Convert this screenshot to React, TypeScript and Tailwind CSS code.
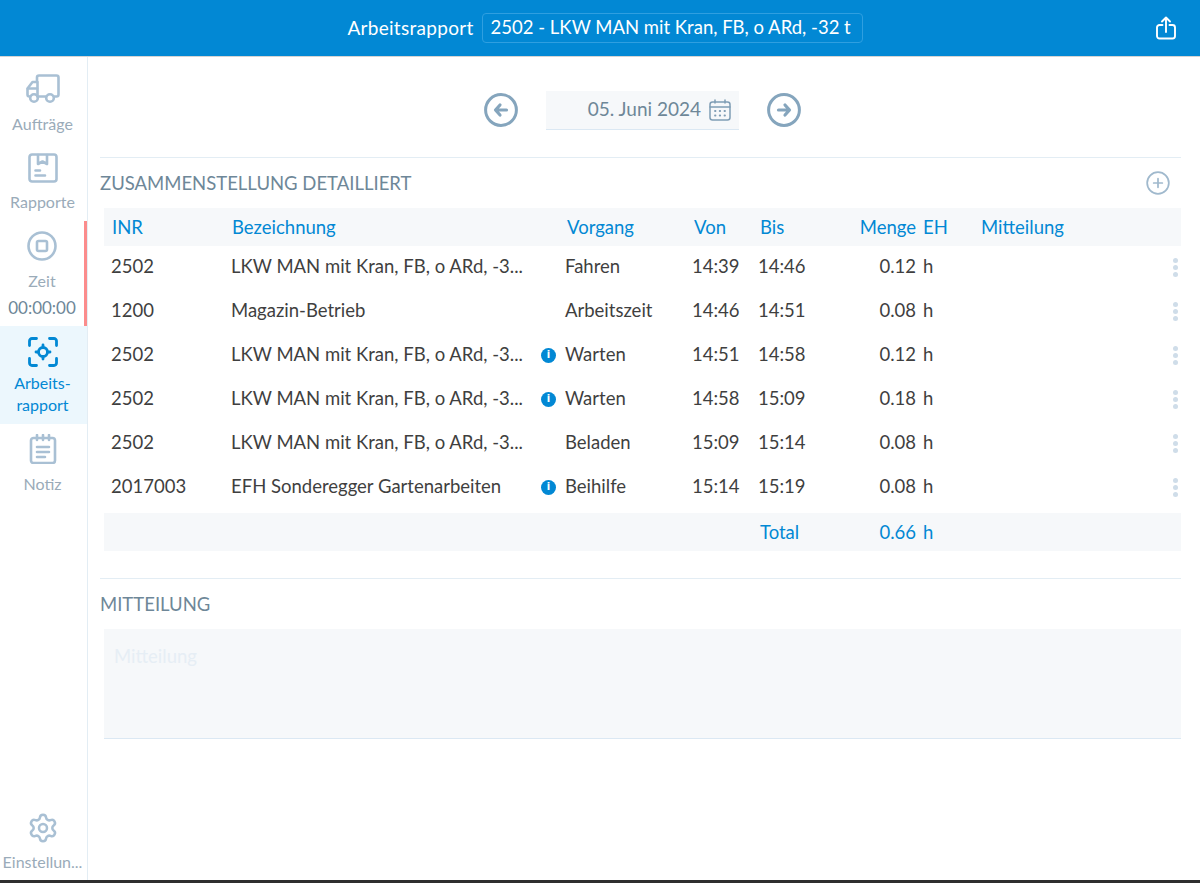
import { CirclePlus, Settings } from "lucide-react";

const FONT = "font-['Lato','Open_Sans',sans-serif]";

type Row = { inr: string; name: string; info?: boolean; step: string; from: string; to: string; qty: string };

const rows: Row[] = [
  { inr: "2502", name: "LKW MAN mit Kran, FB, o ARd, -3...", step: "Fahren", from: "14:39", to: "14:46", qty: "0.12" },
  { inr: "1200", name: "Magazin-Betrieb", step: "Arbeitszeit", from: "14:46", to: "14:51", qty: "0.08" },
  { inr: "2502", name: "LKW MAN mit Kran, FB, o ARd, -3...", info: true, step: "Warten", from: "14:51", to: "14:58", qty: "0.12" },
  { inr: "2502", name: "LKW MAN mit Kran, FB, o ARd, -3...", info: true, step: "Warten", from: "14:58", to: "15:09", qty: "0.18" },
  { inr: "2502", name: "LKW MAN mit Kran, FB, o ARd, -3...", step: "Beladen", from: "15:09", to: "15:14", qty: "0.08" },
  { inr: "2017003", name: "EFH Sonderegger Gartenarbeiten", info: true, step: "Beihilfe", from: "15:14", to: "15:19", qty: "0.08" },
];

const COLS = "grid grid-cols-[120px_334px_127px_66px_66px_92px_65px_1fr_12px] pl-[7px]";

function TruckIcon() {
  return (
    <svg width="34" height="30" viewBox="0 0 34 30" fill="none" stroke="#a9c0d4" strokeWidth="2.6" strokeLinejoin="round" strokeLinecap="round">
      <path d="M11 8V3.5A2 2 0 0 1 13 1.5H30.5A2 2 0 0 1 32.5 3.5V20.5A2 2 0 0 1 30.5 22.5H28" />
      <path d="M20 22.5H11.5V8H6.5L1.5 14.5V20.5A2 2 0 0 0 3.5 22.5H4" />
      <path d="M2 14.5H11" />
      <circle cx="8" cy="24" r="3.8" />
      <circle cx="24" cy="24" r="3.8" />
    </svg>
  );
}

function ReportIcon() {
  return (
    <svg width="30" height="30" viewBox="0 0 30 30" fill="none" stroke="#a9c0d4" strokeWidth="2.6" strokeLinejoin="round" strokeLinecap="round">
      <rect x="1.5" y="1.5" width="27" height="27" rx="2.5" />
      <path d="M10 2V11L14.5 8.5L19 11V2" />
      <path d="M7.5 17.5H12M7.5 22.5H17" />
    </svg>
  );
}

function StopIcon() {
  return (
    <svg width="30" height="30" viewBox="0 0 30 30" fill="none" stroke="#a9c0d4" strokeWidth="2.6">
      <circle cx="15" cy="15" r="13.5" />
      <rect x="10" y="10" width="10" height="10" rx="1.5" />
    </svg>
  );
}

function TargetIcon() {
  return (
    <svg width="30" height="30" viewBox="0 0 30 30" fill="none" stroke="#0288d4" strokeWidth="2.8" strokeLinecap="round" strokeLinejoin="round">
      <path d="M1.5 8.5V4A2.5 2.5 0 0 1 4 1.5H8.5M21.5 1.5H26A2.5 2.5 0 0 1 28.5 4V8.5M28.5 21.5V26A2.5 2.5 0 0 1 26 28.5H21.5M8.5 28.5H4A2.5 2.5 0 0 1 1.5 26V21.5" />
      <circle cx="15" cy="15" r="4.5" />
      <path d="M15 8V10.5M15 19.5V22M8 15H10.5M19.5 15H22" />
    </svg>
  );
}

function NoteIcon() {
  return (
    <svg width="28" height="30" viewBox="0 0 28 30" fill="none" stroke="#a9c0d4" strokeWidth="2.6" strokeLinecap="round" strokeLinejoin="round">
      <rect x="2" y="4" width="24" height="25" rx="2.5" />
      <path d="M8 1V6M14 1V6M20 1V6" />
      <path d="M8 13H20M8 18H20M8 23H16" />
    </svg>
  );
}

function CalendarIcon() {
  return (
    <svg width="22" height="22" viewBox="0 0 22 22" fill="none" stroke="#7f9db5" strokeWidth="1.5" strokeLinecap="round">
      <rect x="1" y="3" width="20" height="18" rx="2.5" />
      <path d="M1 8H21M6 1V4M16 1V4" />
      <path d="M6 12H6.5M10.7 12H11.2M15.5 12H16M6 16.5H6.5M10.7 16.5H11.2M15.5 16.5H16" strokeWidth="1.8" />
    </svg>
  );
}

function ShareIcon() {
  return (
    <svg width="20" height="24" viewBox="0 0 20 24" fill="none" stroke="#ffffff" strokeWidth="1.9" strokeLinecap="round" strokeLinejoin="round">
      <path d="M6.5 9H3.5A2.5 2.5 0 0 0 1 11.5V20A2.5 2.5 0 0 0 3.5 22.5H16.5A2.5 2.5 0 0 0 19 20V11.5A2.5 2.5 0 0 0 16.5 9H13.5" />
      <path d="M10 16V1.5M6 5.5L10 1.5L14 5.5" />
    </svg>
  );
}

function ArrowCircle({ dir }: { dir: "left" | "right" }) {
  return (
    <svg width="34" height="34" viewBox="0 0 34 34" fill="none" stroke="#85a5bd" strokeLinecap="round" strokeLinejoin="round">
      <circle cx="17" cy="17" r="15.4" strokeWidth="3" />
      {dir === "left" ? (
        <path d="M16 12L11.5 17L16 22M12 17H22.5" strokeWidth="3.2" />
      ) : (
        <path d="M18 12L22.5 17L18 22M22 17H11.5" strokeWidth="3.2" />
      )}
    </svg>
  );
}

function InfoDot() {
  return (
    <span className="flex h-[15px] w-[15px] items-center justify-center rounded-full bg-[#0288d4] font-['DejaVu_Sans',sans-serif] text-[10px] font-bold leading-none text-white">
      i
    </span>
  );
}

function Kebab() {
  return (
    <span className="flex flex-col items-center gap-[2px]">
      <span className="h-[5px] w-[5px] rounded-full bg-[#cfdde9]" />
      <span className="h-[5px] w-[5px] rounded-full bg-[#cfdde9]" />
      <span className="h-[5px] w-[5px] rounded-full bg-[#cfdde9]" />
    </span>
  );
}

export default function App() {
  return (
    <div className={`flex h-[883px] w-[1200px] flex-col overflow-hidden bg-white ${FONT}`}>
      <header className="flex h-[57px] shrink-0 items-center border-b border-[#d4d4d4] bg-[#0288d4]">
        <div className="flex flex-1 items-center justify-center gap-2 pl-[54px]">
          <span className="text-[19px] tracking-[0.3px] text-white">Arbeitsrapport</span>
          <span className="flex h-[30px] w-[381px] items-center rounded-[4px] border border-[#2f9fe0] pl-2 text-[18.5px] text-white">
            2502 - LKW MAN mit Kran, FB, o ARd, -32 t
          </span>
        </div>
        <div className="pr-[24px]">
          <ShareIcon />
        </div>
      </header>

      <div className="flex min-h-0 flex-1">
        <aside className="flex w-[88px] shrink-0 flex-col border-r border-[#e3edf4] pt-[7px] text-[#9aabb9]">
          <div className="flex h-[78px] flex-col items-center pt-[10px] pr-[2px]">
            <TruckIcon />
            <span className="mt-[10px] text-[16px] leading-[20px]">Aufträge</span>
          </div>
          <div className="flex h-[79px] flex-col items-center pt-[11px] pr-[2px]">
            <ReportIcon />
            <span className="mt-[9px] text-[16px] leading-[20px]">Rapporte</span>
          </div>
          <div className="flex h-[105px] flex-col items-center border-r-[3px] border-[#fb8c8c] pt-[10px]">
            <StopIcon />
            <span className="mt-[10px] text-[16px] leading-[20px]">Zeit</span>
            <span className="mt-[7px] text-[17px] leading-[20px] text-[#6e8798]">00:00:00</span>
          </div>
          <div className="flex h-[98px] flex-col items-center bg-[#ecf7fd] pt-[11px] pr-[2px] text-[#0288d4]">
            <TargetIcon />
            <span className="mt-[5px] text-[16px] leading-[22px]">Arbeits-</span>
            <span className="text-[16px] leading-[22px]">rapport</span>
          </div>
          <div className="flex h-[78px] flex-col items-center pt-[10px] pr-[2px]">
            <NoteIcon />
            <span className="mt-[10px] text-[16px] leading-[20px]">Notiz</span>
          </div>
          <div className="mt-auto flex flex-col items-center pb-[8px] pr-[2px]">
            <Settings size={32} strokeWidth={1.9} color="#a9c0d4" />
            <span className="mt-[8px] text-[16px] leading-[20px]">Einstellun...</span>
          </div>
        </aside>

        <main className="min-w-0 flex-1 pl-[12px] pr-[19px]">
          <div className="flex h-[101px] items-center justify-center gap-[28px] border-b border-[#e3edf4] pl-[4px] pt-[7px] pb-[1px]">
            <ArrowCircle dir="left" />
            <div className="flex h-[39px] w-[193px] items-center justify-end gap-[8px] border-b border-[#dbe8f3] bg-[#f6f8fa] pr-[8px]">
              <span className="text-[19px] text-[#6e8798]">05. Juni 2024</span>
              <CalendarIcon />
            </div>
            <ArrowCircle dir="right" />
          </div>

          <div className="flex h-[50px] items-center justify-between pr-[10px]">
            <h2 className="pt-[2px] text-[18.5px] font-normal text-[#6e8798]">ZUSAMMENSTELLUNG DETAILLIERT</h2>
            <CirclePlus size={26} strokeWidth={1.6} color="#a0b9cd" />
          </div>

          <section className="ml-[4px]">
            <div className={`${COLS} h-[38px] items-center bg-[#f6f8fa] pt-[2px] text-[18.5px] text-[#0288d4]`}>
              <span className="pl-px">INR</span>
              <span className="pl-px">Bezeichnung</span>
              <span className="pl-[2px]">Vorgang</span>
              <span className="pl-[2px]">Von</span>
              <span className="pl-[2px]">Bis</span>
              <span className="text-right">Menge</span>
              <span className="pl-[7px]">EH</span>
              <span>Mitteilung</span>
              <span />
            </div>
            {rows.map((row, i) => (
              <div key={i} className={`${COLS} h-[44px] items-center pb-[2px] text-[18.5px] text-[#3f3f3f]`}>
                <span>{row.inr}</span>
                <span className="flex items-center justify-between pr-[9px]">
                  <span>{row.name}</span>
                  {row.info && <InfoDot />}
                </span>
                <span>{row.step}</span>
                <span>{row.from}</span>
                <span>{row.to}</span>
                <span className="text-right">{row.qty}</span>
                <span className="pl-[7px]">h</span>
                <span />
                <Kebab />
              </div>
            ))}
            <div className={`${COLS} mt-[3px] h-[38px] items-center bg-[#f6f8fa] pt-[2px] text-[18.5px] text-[#0288d4]`}>
              <span />
              <span />
              <span />
              <span />
              <span className="col-span-2 flex justify-between pl-[2px]">
                <span>Total</span>
                <span>0.66</span>
              </span>
              <span className="pl-[7px]">h</span>
              <span />
              <span />
            </div>
          </section>

          <div className="mt-[27px] flex h-[51px] items-center border-t border-[#e3edf4]">
            <h2 className="pt-[2px] text-[18.5px] font-normal text-[#6e8798]">MITTEILUNG</h2>
          </div>
          <div className="ml-[4px] h-[110px] border-b border-[#dbe8f3] bg-[#f6f8fa] pl-[10px] pt-[15px] text-[18.5px] leading-[24px] text-[#e6eef5]">
            Mitteilung
          </div>
        </main>
      </div>
      <div className="h-[3px] shrink-0 bg-[#2e2e2e]" />
    </div>
  );
}
